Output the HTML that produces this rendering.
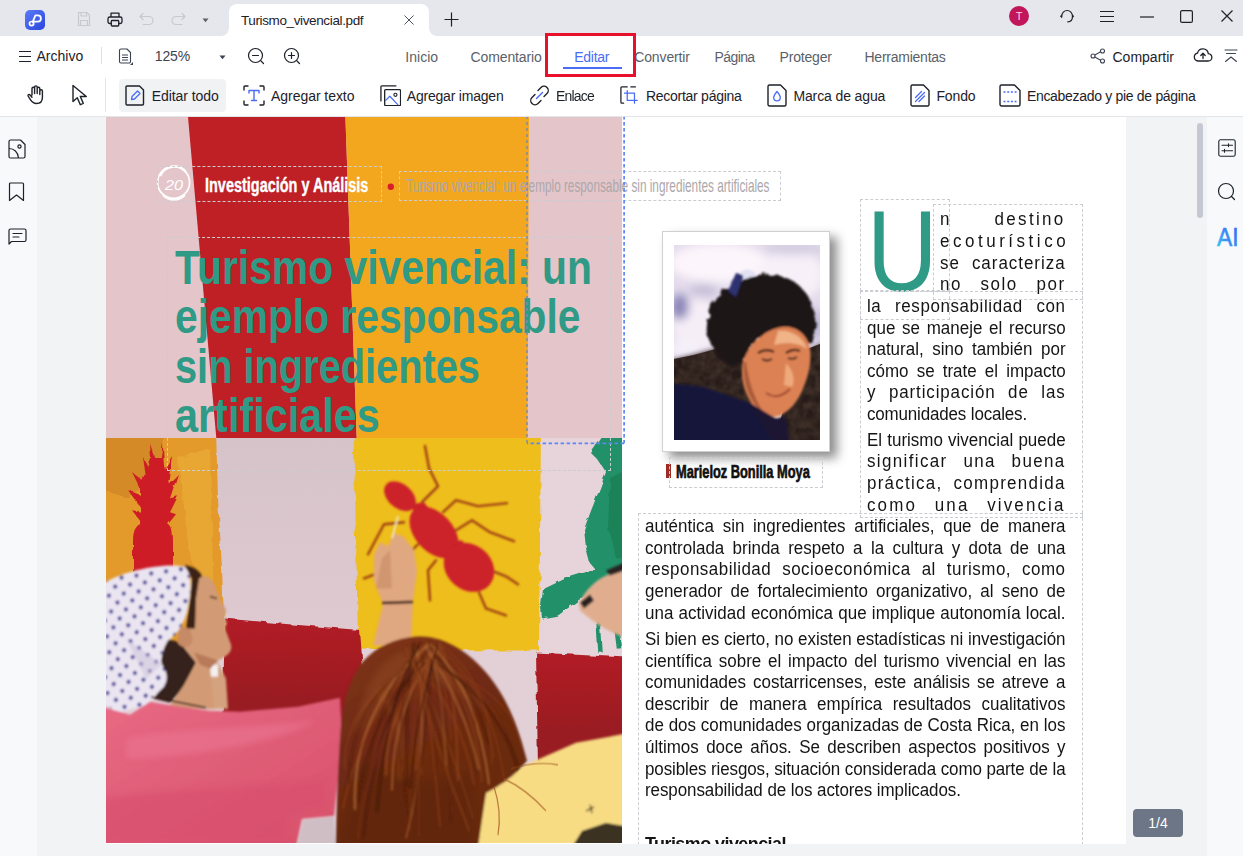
<!DOCTYPE html>
<html lang="es">
<head>
<meta charset="utf-8">
<title>Turismo_vivencial.pdf</title>
<style>
*{box-sizing:border-box;margin:0;padding:0}
html,body{width:1243px;height:856px;overflow:hidden}
body{position:relative;background:#f2f3f5;font-family:"Liberation Sans","DejaVu Sans",sans-serif;color:#1d2129;font-size:14px}
.abs{position:absolute}
svg text{font-family:"Liberation Sans","DejaVu Sans",sans-serif}
#titlebar{left:0;top:0;width:1243px;height:36px;background:#e6e7ec}
#tab{left:229px;top:4px;width:200px;height:32px;background:#fff;border-radius:8px 8px 0 0}
#tb1{left:0;top:36px;width:1243px;height:39px;background:#fff}
#tb2{left:0;top:75px;width:1243px;height:42px;background:#fff;border-bottom:1px solid #e3e5e9}
#lside{left:0;top:117px;width:37px;height:739px;background:#f8f9fb}
#rside{left:1207px;top:117px;width:36px;height:739px;background:#f8f9fb}
#page{left:106px;top:117px;width:1020px;height:727px;background:#fff;overflow:hidden}
#pg{left:-106px;top:-117px;width:1243px;height:856px}
.t{position:absolute;white-space:nowrap;line-height:1}
.m1{font-size:14px;color:#5a5f69;top:50px}
.m2{font-size:14px;color:#1d2129;top:89px}
.bl{position:absolute;white-space:nowrap;line-height:1;color:#141414;text-align:justify;text-align-last:justify;transform:scaleX(0.97);transform-origin:0 0}
</style>
</head>
<body>
<div id="titlebar" class="abs"></div>
<div id="tab" class="abs"></div>
<div id="tb1" class="abs"></div>
<div id="tb2" class="abs"></div>
<div id="lside" class="abs"></div>
<div id="rside" class="abs"></div>
<div id="page" class="abs"><div id="pg" class="abs">
<svg class="abs" style="left:106px;top:117px" width="516" height="321" viewBox="106 117 516 321">
<rect x="106" y="117" width="516" height="321" fill="#e4c6ca"/>
<path d="M188 117H345.400L356.700 438H216.300Z" fill="#be2026"/>
<path d="M345.400 117H529L527.500 438H356.700Z" fill="#f3a71f"/>
<circle cx="173.600" cy="182.400" r="16" fill="none" stroke="#fff" stroke-width="1.700"/>
<path d="M160 176a15.500 15.500 0 0 1 26-4" fill="none" stroke="#fff" stroke-width="2.600" opacity="0.900"/>
<path d="M163 195a15.500 15.500 0 0 0 22 0" fill="none" stroke="#fff" stroke-width="2.400" opacity="0.900"/>
<circle cx="390.800" cy="186.800" r="3.200" fill="#d7202a"/>
</svg>
<svg class="abs" style="left:164.5px;top:174.5px;overflow:visible" width="18.0" height="19.5"><text x="0" y="15" textLength="18.0" lengthAdjust="spacingAndGlyphs" fill="#fff" style="font-size:15px;font-style:italic;">20</text></svg>
<svg class="abs" style="left:204.7px;top:172.2px;overflow:visible" width="163.4" height="25.5"><text x="0" y="19.6" textLength="163.4" lengthAdjust="spacingAndGlyphs" fill="#fff" style="font-size:19.6px;font-weight:bold;stroke:#fff;stroke-width:0.4px;">Investigación y Análisis</text></svg>
<svg class="abs" style="left:405.5px;top:172.8px;overflow:visible" width="363.5" height="24.7"><text x="0" y="19" textLength="363.5" lengthAdjust="spacingAndGlyphs" fill="#aca7aa" style="font-size:19px;">Turismo vivencial: un ejemplo responsable sin ingredientes artificiales</text></svg>
<svg class="abs" style="left:175px;top:235.5px;overflow:visible" width="417.0" height="61.8"><text x="0" y="47.5" textLength="417.0" lengthAdjust="spacingAndGlyphs" fill="#2f9a85" style="font-size:47.5px;font-weight:bold;">Turismo vivencial: un</text></svg>
<svg class="abs" style="left:175px;top:284.5px;overflow:visible" width="405.5" height="61.8"><text x="0" y="47.5" textLength="405.5" lengthAdjust="spacingAndGlyphs" fill="#2f9a85" style="font-size:47.5px;font-weight:bold;">ejemplo responsable</text></svg>
<svg class="abs" style="left:175px;top:334.8px;overflow:visible" width="305.0" height="61.8"><text x="0" y="47.5" textLength="305.0" lengthAdjust="spacingAndGlyphs" fill="#2f9a85" style="font-size:47.5px;font-weight:bold;">sin ingredientes</text></svg>
<svg class="abs" style="left:175px;top:384.3px;overflow:visible" width="204.7" height="61.8"><text x="0" y="47.5" textLength="204.7" lengthAdjust="spacingAndGlyphs" fill="#2f9a85" style="font-size:47.5px;font-weight:bold;">artificiales</text></svg>
<svg class="abs" style="left:106px;top:438px" width="516" height="405" viewBox="0 0 516 404" preserveAspectRatio="none">
<defs>
<filter id="b1" x="-5%" y="-5%" width="110%" height="110%"><feGaussianBlur stdDeviation="0.8"/></filter>
<filter id="b3" x="-10%" y="-10%" width="120%" height="120%"><feGaussianBlur stdDeviation="3"/></filter>
<filter id="b6" x="-20%" y="-20%" width="140%" height="140%"><feGaussianBlur stdDeviation="6"/></filter>
<filter id="rough" x="-5%" y="-5%" width="110%" height="110%"><feTurbulence type="fractalNoise" baseFrequency="0.09" numOctaves="2" seed="3" result="n"/><feDisplacementMap in="SourceGraphic" in2="n" scale="5"/><feGaussianBlur stdDeviation="0.6"/></filter>
<pattern id="dots" width="15" height="16" patternUnits="userSpaceOnUse" patternTransform="rotate(-8)"><circle cx="3.500" cy="4" r="2" fill="#2e2a8a"/><circle cx="11" cy="12" r="2" fill="#2e2a8a"/></pattern>
<linearGradient id="hairg" x1="0.200" y1="0" x2="0.700" y2="1"><stop offset="0" stop-color="#7e3416"/><stop offset="0.450" stop-color="#6e2a12"/><stop offset="1" stop-color="#682a10"/></linearGradient>
<linearGradient id="wallg" x1="0" y1="0" x2="0" y2="1"><stop offset="0" stop-color="#d6c2c9"/><stop offset="1" stop-color="#dfcad2"/></linearGradient>
<linearGradient id="pinkg" x1="0" y1="0" x2="1" y2="1"><stop offset="0" stop-color="#e86a84"/><stop offset="1" stop-color="#d8506a"/></linearGradient>
<linearGradient id="redg" x1="0" y1="0" x2="0" y2="1"><stop offset="0" stop-color="#b21e26"/><stop offset="0.700" stop-color="#981a20"/></linearGradient><clipPath id="pc"><rect width="516" height="404"/></clipPath>
</defs>
<g clip-path="url(#pc)">
<rect width="516" height="404" fill="#e3d0d7"/>
<g filter="url(#rough)">
<!-- wall -->
<rect x="105" y="-5" width="150" height="210" fill="url(#wallg)"/>
<rect x="431" y="-5" width="95" height="235" fill="#e6d4da"/>
<!-- orange panel -->
<path d="M-8 -8H110L112 60L116 130L119 210H-8Z" fill="#e39a2c"/>
<path d="M-8 -8H60L50 40L20 60L-8 50Z" fill="#d48a28"/>
<path d="M72 20L104 10L108 170L84 120Z" fill="#e8a632"/>
<!-- pineapple -->
<path d="M27 134V102C27 92 30 87 36 85L26 72L38 74L22 52L38 58L26 34L40 46L36 18L46 36L44 6L53 30L57 5L58 32L66 18L62 46L72 36L64 60L72 58L64 74L70 76L62 86C66 88 67 94 67 102V134Z" fill="#cd1e28"/>
<path d="M34 86L34 50L44 20L56 20L64 50L62 86Z" fill="#cd1e28"/>
<!-- yellow panel -->
<path d="M247.500 -8H435L434 100L433 212L300 211.500L252 210L250 100Z" fill="#eebe1e"/>
<!-- red band left -->
<path d="M119 180L180 185.500L254 191.500L262 300H116Z" fill="url(#redg)"/>
<!-- red panel right -->
<path d="M430 214L524 219V330H432Z" fill="url(#redg)"/>
<!-- green animal -->
<path d="M498 -6L484 14L492 22L500 34L494 50L486 70L478 91L480 110L484 125L489 131L460 140L437 151L435 168L436 180L452 177L479 157L490 151L497 160L524 164V-6Z" fill="#23916a"/>
<path d="M504 40L524 30V120H510L502 90Z" fill="#1b8259"/>
<path d="M491 160L494.500 214M509 178L513 210" stroke="#23916a" stroke-width="4.500" fill="none"/>
</g>
<g filter="url(#b1)">
<!-- ant -->
<g fill="none" stroke="#a04016" stroke-width="2.400" stroke-linecap="round" stroke-linejoin="round">
<path d="M319 8L323 30L332 48L316 64"/><path d="M337 74L350 62L372 68L401 65"/><path d="M350 92L366 82L384 94L408 103"/><path d="M385 132L400 138L412 146"/><path d="M373 154L380 170L400 177"/><path d="M330 122L322 132L324 162"/><path d="M298 84L278 86L262 116"/><path d="M312 106L290 128L258 140"/>
</g>
<g fill="#cc202a"><path d="M304 66L318 64L346 100L330 112Z"/><path d="M338 104L356 102L366 118L346 128Z"/><ellipse cx="294" cy="58" rx="18" ry="12" transform="rotate(40 294 58)"/><ellipse cx="328" cy="94" rx="30" ry="19" transform="rotate(48 328 94)"/><ellipse cx="363" cy="129" rx="27" ry="22.500" transform="rotate(40 363 129)"/></g>
<!-- right hand + brush -->
<path d="M473 165C480 150 492 139 506 135L524 130V200C505 196 488 184 474 172Z" fill="#e0ae8e"/>
<path d="M474 164L484 156L488 162L478 170Z" fill="#2a2220"/>
<path d="M500 132L524 122V130L504 137Z" fill="#2a2220"/>
<!-- girl1 raised arm and hand -->
<path d="M267 207L277 166L268 142L268 116L274 104L282 108L288 95L297 98L302 104L308 112L311 132L307 162L305 207Z" fill="#e0a880"/>
<path d="M270 150L276 120L284 112L286 150Z" fill="#d09670"/>
<path d="M276 164.500L307 163.500" stroke="#3a1e18" stroke-width="2.600" fill="none"/>
<path d="M286 100L292 78" stroke="#f4ead8" stroke-width="1.600" fill="none"/>
<!-- girl1 other hand -->
<path d="M98 226L112 224L120 240L122 270L100 270Z" fill="#d4a27e"/>
<path d="M98 226L112 226L112 238L100 238Z" fill="#f4f0f0"/>
<!-- girl1 hair -->
<path d="M78 127C90 128 99 136 97 146L93 160L91 190L80 192L84 160L86 140Z" fill="#3a2118"/>
<path d="M60 200L74 204L90 224L80 246L64 264L48 260L56 246L54 226Z" fill="#35201a"/>
<!-- girl1 face -->
<path d="M93 140C101 134 108 142 110 150L114 160L120.500 172L118 178L121 184L119 190L125 206C127 214 120 218 112 222L104 228L108 270L62 270L78 246L90 224L74 204C72 196 76 190 82 190L89 190L90 160Z" fill="#d29b76"/>
<path d="M72 190C80 186 88 192 86 203C84 210 76 210 72 205Z" fill="#c68a66"/>
<path d="M88 214L112 222L104 230L94 226Z" fill="#b87a58"/>
<path d="M104 158l7 2" stroke="#4a2a1e" stroke-width="1.600"/>
<!-- scarf -->
<path id="scf" d="M-4 146C10 136 50 124 78 128C86 134 86 150 82 168C80 182 72 196 62 202C56 212 54 220 56 226C62 234 62 242 58 248L40 266L12 274L-4 264Z" fill="#ebe5f1"/>
<path d="M-4 146C10 136 50 124 78 128C86 134 86 150 82 168C80 182 72 196 62 202C56 212 54 220 56 226C62 234 62 242 58 248L40 266L12 274L-4 264Z" fill="url(#dots)"/>
<path d="M20 200L56 226L40 240Z" fill="#cfc6dc" opacity="0.600"/>
<!-- pink shirt -->
<path d="M-4 268L24 276L44 263L74 268L103 272L134 273L192 268L234 259L236 300L232 340L228 377L196 380L190 408H-4Z" fill="url(#pinkg)"/>
<path d="M197 381L228 378L229 408H191Z" fill="#cfbec4"/>
<path d="M45 258L100 269" stroke="#3a1a1a" stroke-width="1.500" fill="none"/>
<!-- yellow shirt -->
<path d="M366 408L372 356L420 326L470 304L524 294V408Z" fill="#f8dc84"/>
<path d="M466 408L476 392L500 384L524 388V408Z" fill="#3a3020"/>
<path d="M480 372l8-4M484 366l2 8" stroke="#2a2418" stroke-width="1.200"/>
<!-- girl2 hair -->
<path d="M312 198C340 197 368 216 388 244C404 266 414 294 421 322C412 334 396 346 380 354L372 408H230C230 380 232 330 234 300C236 270 240 246 256 224C270 208 290 199 312 198Z" fill="url(#hairg)"/>
</g>
<g filter="url(#b3)" opacity="0.650">
<path d="M300 212C330 212 360 236 382 276C360 256 330 238 300 240C280 245 262 268 250 300C252 260 270 218 300 212Z" fill="#8a4420"/>
<path d="M250 320C280 336 320 348 366 336L368 408H232Z" fill="#5e2610"/>
<path d="M270 250C290 270 300 300 296 340" stroke="#96501f" stroke-width="5" fill="none"/>
<path d="M330 240C360 270 380 300 384 340" stroke="#6a2a12" stroke-width="6" fill="none"/>
<path d="M20 300C60 290 140 290 210 282C180 300 100 318 20 320Z" fill="#ea7590"/>
<path d="M-4 360C60 350 140 350 218 342L218 366L184 374L180 408H-4Z" fill="#d8506e"/>
</g>
<clipPath id="hc"><path d="M312 198C340 197 368 216 388 244C404 266 414 294 421 322C412 334 396 346 380 354L372 408H230C230 380 232 330 234 300C236 270 240 246 256 224C270 208 290 199 312 198Z"/></clipPath>
<g fill="none" stroke-linecap="round" clip-path="url(#hc)" filter="url(#b1)"><path d="M314 214Q327 301 334 387" stroke="#8a3e1a" stroke-width="2.4" opacity="0.52"/><path d="M321 207Q245 274 249 370" stroke="#b06a34" stroke-width="2.8" opacity="0.69"/><path d="M322 215Q261 261 237 369" stroke="#8a3e1a" stroke-width="2.1" opacity="0.62"/><path d="M309 215Q273 252 258 352" stroke="#5a200e" stroke-width="1.5" opacity="0.70"/><path d="M336 219Q352 239 357 311" stroke="#7a3014" stroke-width="1.2" opacity="0.39"/><path d="M308 205Q300 242 300 346" stroke="#3a1408" stroke-width="2.8" opacity="0.49"/><path d="M299 215Q342 255 353 304" stroke="#7a3014" stroke-width="2.7" opacity="0.40"/><path d="M324 204Q360 247 371 334" stroke="#5a200e" stroke-width="2.4" opacity="0.50"/><path d="M311 211Q325 305 300 399" stroke="#b06a34" stroke-width="1.5" opacity="0.66"/><path d="M304 211Q345 292 346 373" stroke="#8a3e1a" stroke-width="1.8" opacity="0.35"/><path d="M320 219Q246 251 243 345" stroke="#4a1a0c" stroke-width="1.7" opacity="0.51"/><path d="M334 213Q386 254 404 309" stroke="#7a3014" stroke-width="2.1" opacity="0.60"/><path d="M302 215Q375 238 388 319" stroke="#9a4e22" stroke-width="1.2" opacity="0.36"/><path d="M335 208Q350 245 352 341" stroke="#8a3e1a" stroke-width="2.7" opacity="0.69"/><path d="M301 213Q363 252 382 304" stroke="#5a200e" stroke-width="1.0" opacity="0.44"/><path d="M314 205Q281 262 271 372" stroke="#3a1408" stroke-width="2.8" opacity="0.58"/><path d="M324 215Q234 264 239 331" stroke="#9a4e22" stroke-width="1.0" opacity="0.57"/><path d="M315 217Q329 269 330 336" stroke="#5a200e" stroke-width="2.3" opacity="0.40"/><path d="M335 210Q278 271 280 336" stroke="#9a4e22" stroke-width="2.6" opacity="0.55"/><path d="M321 211Q375 253 382 304" stroke="#3a1408" stroke-width="2.3" opacity="0.49"/><path d="M325 214Q315 246 315 336" stroke="#b06a34" stroke-width="1.2" opacity="0.36"/><path d="M334 206Q385 241 386 324" stroke="#8a3e1a" stroke-width="2.2" opacity="0.42"/><path d="M303 220Q354 266 368 345" stroke="#8a3e1a" stroke-width="2.1" opacity="0.63"/><path d="M326 208Q272 262 257 398" stroke="#4a1a0c" stroke-width="2.5" opacity="0.65"/><path d="M324 221Q266 264 252 363" stroke="#3a1408" stroke-width="1.7" opacity="0.53"/><path d="M323 217Q347 299 345 381" stroke="#4a1a0c" stroke-width="2.6" opacity="0.36"/><path d="M324 214Q314 257 310 331" stroke="#9a4e22" stroke-width="2.4" opacity="0.44"/><path d="M327 218Q319 296 308 374" stroke="#5a200e" stroke-width="2.5" opacity="0.69"/><path d="M323 208Q342 243 345 301" stroke="#8a3e1a" stroke-width="1.4" opacity="0.62"/><path d="M318 221Q410 254 415 308" stroke="#8a3e1a" stroke-width="1.2" opacity="0.68"/><path d="M325 206Q372 254 383 345" stroke="#b06a34" stroke-width="2.4" opacity="0.68"/><path d="M315 216Q304 291 304 391" stroke="#8a3e1a" stroke-width="1.4" opacity="0.49"/><path d="M300 210Q342 294 367 379" stroke="#9a4e22" stroke-width="1.6" opacity="0.38"/><path d="M314 214Q368 233 371 301" stroke="#7a3014" stroke-width="1.1" opacity="0.54"/><path d="M323 220Q402 267 415 345" stroke="#3a1408" stroke-width="2.7" opacity="0.52"/><path d="M334 206Q286 265 286 351" stroke="#b06a34" stroke-width="1.9" opacity="0.67"/><path d="M306 216Q327 303 363 391" stroke="#8a3e1a" stroke-width="2.7" opacity="0.53"/><path d="M319 208Q357 262 373 330" stroke="#b06a34" stroke-width="2.7" opacity="0.54"/><path d="M336 206Q261 299 252 399" stroke="#7a3014" stroke-width="2.7" opacity="0.44"/><path d="M315 206Q313 269 313 397" stroke="#8a3e1a" stroke-width="1.8" opacity="0.36"/><path d="M306 217Q285 296 303 375" stroke="#4a1a0c" stroke-width="1.6" opacity="0.47"/><path d="M321 206Q336 236 340 326" stroke="#b06a34" stroke-width="2.6" opacity="0.36"/><path d="M321 219Q368 251 376 343" stroke="#8a3e1a" stroke-width="2.5" opacity="0.56"/><path d="M330 208Q385 246 399 345" stroke="#8a3e1a" stroke-width="1.4" opacity="0.70"/><path d="M332 206Q311 272 304 349" stroke="#3a1408" stroke-width="2.0" opacity="0.60"/><path d="M304 215Q332 261 338 328" stroke="#4a1a0c" stroke-width="1.2" opacity="0.53"/></g>
<g fill="none" stroke="#9a4a1c" stroke-width="1.200" opacity="0.700"><path d="M405 330Q430 322 452 326"/><path d="M398 340Q420 350 440 372"/><path d="M388 348Q396 372 392 396"/></g>
</g>
</svg>

<div class="abs" style="left:661.500px;top:231px;width:168px;height:221px;background:#fff;border:1px solid #d0d0d0;box-shadow:7px 6px 10px rgba(0,0,0,0.45)"></div>
<svg class="abs" style="left:673.500px;top:244.500px" width="146" height="195" viewBox="0 0 146 195">
<defs><filter id="pb1" x="-20%" y="-20%" width="140%" height="140%"><feGaussianBlur stdDeviation="1.200"/></filter><filter id="pb2" x="-20%" y="-20%" width="140%" height="140%"><feGaussianBlur stdDeviation="2.500"/></filter><filter id="pb5" x="-30%" y="-30%" width="160%" height="160%"><feGaussianBlur stdDeviation="5"/></filter>
<filter id="mott" x="0" y="0" width="100%" height="100%"><feTurbulence type="fractalNoise" baseFrequency="0.12" numOctaves="2" seed="7"/><feColorMatrix values="0 0 0 0 0.35  0 0 0 0 0.22  0 0 0 0 0.14  0.9 0.9 0 0 -0.55"/></filter>
<filter id="wisp" x="-10%" y="-10%" width="120%" height="120%"><feTurbulence type="fractalNoise" baseFrequency="0.15" numOctaves="2" seed="5" result="n"/><feDisplacementMap in="SourceGraphic" in2="n" scale="7"/><feGaussianBlur stdDeviation="0.700"/></filter><clipPath id="ppc"><rect width="146" height="195"/></clipPath><clipPath id="terr"><path d="M0 114L20 110L42 104L60 112L80 120L80 195H0ZM128 106L146 99V195H100Z"/></clipPath></defs>
<g clip-path="url(#ppc)">
<rect width="146" height="195" fill="#e3daeb"/>
<g filter="url(#pb5)">
<ellipse cx="45" cy="18" rx="50" ry="20" fill="#fcf5fb"/>
<ellipse cx="118" cy="30" rx="32" ry="26" fill="#f8f0f8"/>
<ellipse cx="24" cy="80" rx="26" ry="26" fill="#f6eef7"/>
<ellipse cx="6" cy="62" rx="9" ry="13" fill="#8a85b8"/>
<ellipse cx="30" cy="45" rx="14" ry="7" fill="#c6bfd8"/>
<ellipse cx="138" cy="80" rx="14" ry="16" fill="#c2bbd8"/>
<ellipse cx="120" cy="4" rx="30" ry="6" fill="#d2cbe0"/>
<ellipse cx="10" cy="104" rx="16" ry="8" fill="#f4f1fb"/>
</g>
<g filter="url(#pb2)">
<path d="M-5 116L20 110L42 104L60 120L60 200H-5Z" fill="#2a1f1b"/>
<path d="M128 108L150 98V200H100Z" fill="#33261d"/>
</g>
<g clip-path="url(#terr)"><rect x="0" y="95" width="146" height="100" fill="#261b18"/><rect x="0" y="95" width="146" height="100" filter="url(#mott)" opacity="0.300"/></g>
<g filter="url(#pb1)">
<path d="M34 74C36 60 42 48 56 40C66 32 84 28 100 30C120 32 134 46 139 62C143 76 141 92 137 100L128 92L112 84L92 88L78 100L70 116L62 122C50 120 40 108 36 96C32 90 32 82 34 74Z" fill="#1c1216" filter="url(#wisp)"/>
<path d="M54 46L62 28L70 30L62 52Z" fill="#2e3070"/>
<path d="M66 28C70 22 80 24 82 30L72 34Z" fill="#e2e2f4"/>
<path d="M108 82C122 80 134 90 136 104C138 118 134 132 128 146C122 160 110 172 98 172C88 172 80 164 74 152C68 140 66 126 70 114C76 98 92 84 108 82Z" fill="#dc8152"/>
<path d="M104 86C116 84 130 92 133 104C126 98 112 96 100 100Z" fill="#f0b488"/>
<path d="M112 118C118 124 122 134 118 142L110 140Z" fill="#eeaa7c"/>
<path d="M72 116C74 132 78 150 90 168C78 160 68 140 70 118Z" fill="#a85c3a"/>
<path d="M-5 138L30 142L76 158L106 176L116 200H-5Z" fill="#15183a"/>
<path d="M76 158L98 174L112 172L116 200H100Z" fill="#1c1830"/>
<path d="M84 108q8-5 16-1M112 108q7-5 14-2" stroke="#3a1e16" stroke-width="2.200" fill="none"/>
<path d="M88 114q5 3 10 0M114 113q5 2 9-1" stroke="#2a1612" stroke-width="1.800" fill="none"/>
<path d="M92 148q12 8 24-4" stroke="#9a4634" stroke-width="2" fill="none"/>
</g>
</g>
</svg>

<div class="abs" style="left:666px;top:464px;width:4.500px;height:13.500px;background:#9c2a26"></div>
<svg class="abs" style="left:676.3px;top:459.6px;overflow:visible" width="133.8" height="23.4"><text x="0" y="18" textLength="133.8" lengthAdjust="spacingAndGlyphs" fill="#111" style="font-size:18px;font-weight:bold;stroke:#111;stroke-width:0.7px;">Marieloz Bonilla Moya</text></svg>
<svg class="abs" style="left:867.0px;top:176.3px;overflow:visible" width="70.6" height="149.0"><text x="0" y="114.6" textLength="70.6" lengthAdjust="spacingAndGlyphs" fill="#2f9a85" style="font-size:114.6px;">U</text></svg>
<div class="bl" style="left:940px;top:211.2px;width:129.48px;font-size:17.5px;letter-spacing:2.4px;">n destino</div>
<div class="bl" style="left:940px;top:232.9px;width:133.12px;font-size:17.5px;letter-spacing:3.636px;">ecoturístico</div>
<div class="bl" style="left:940px;top:254.5px;width:129.48px;font-size:17.5px;letter-spacing:1.0px;">se caracteriza</div>
<div class="bl" style="left:940px;top:276.2px;width:129.48px;font-size:17.5px;letter-spacing:1.6px;">no solo por</div>
<div class="bl" style="left:867px;top:297.8px;width:204.74px;font-size:17.5px;letter-spacing:0.6px;">la responsabilidad con</div>
<div class="bl" style="left:867px;top:319.5px;width:204.74px;font-size:17.5px;">que se maneje el recurso</div>
<div class="bl" style="left:867px;top:341.1px;width:204.74px;font-size:17.5px;">natural, sino también por</div>
<div class="bl" style="left:867px;top:362.8px;width:204.74px;font-size:17.5px;">cómo se trate el impacto</div>
<div class="bl" style="left:867px;top:384.4px;width:204.74px;font-size:17.5px;letter-spacing:0.9px;">y participación de las</div>
<div class="bl" style="left:867px;top:406.1px;width:164.95px;font-size:17.5px;letter-spacing:-0.177px;">comunidades locales.</div>
<div class="bl" style="left:867px;top:431.5px;width:204.74px;font-size:17.5px;">El turismo vivencial puede</div>
<div class="bl" style="left:867px;top:453.2px;width:204.74px;font-size:17.5px;letter-spacing:1.4px;">significar una buena</div>
<div class="bl" style="left:867px;top:474.8px;width:204.74px;font-size:17.5px;letter-spacing:1.3px;">práctica, comprendida</div>
<div class="bl" style="left:867px;top:496.5px;width:204.74px;font-size:17.5px;letter-spacing:2.2px;">como una vivencia</div>
<div class="bl" style="left:645.1px;top:518.1px;width:433.51px;font-size:17.5px;">auténtica sin ingredientes artificiales, que de manera</div>
<div class="bl" style="left:645.1px;top:539.8px;width:433.51px;font-size:17.5px;">controlada brinda respeto a la cultura y dota de una</div>
<div class="bl" style="left:645.1px;top:561.4px;width:433.51px;font-size:17.5px;letter-spacing:0.5px;">responsabilidad socioeconómica al turismo, como</div>
<div class="bl" style="left:645.1px;top:583.1px;width:433.51px;font-size:17.5px;">generador de fortalecimiento organizativo, al seno de</div>
<div class="bl" style="left:645.1px;top:604.7px;width:433.51px;font-size:17.5px;">una actividad económica que implique autonomía local.</div>
<div class="bl" style="left:645.1px;top:630.8px;width:433.51px;font-size:17.5px;letter-spacing:-0.049px;">Si bien es cierto, no existen estadísticas ni investigación</div>
<div class="bl" style="left:645.1px;top:652.5px;width:433.51px;font-size:17.5px;">científica sobre el impacto del turismo vivencial en las</div>
<div class="bl" style="left:645.1px;top:674.1px;width:433.51px;font-size:17.5px;">comunidades costarricenses, este análisis se atreve a</div>
<div class="bl" style="left:645.1px;top:695.8px;width:433.51px;font-size:17.5px;">describir de manera empírica resultados cualitativos</div>
<div class="bl" style="left:645.1px;top:717.4px;width:433.51px;font-size:17.5px;">de dos comunidades organizadas de Costa Rica, en los</div>
<div class="bl" style="left:645.1px;top:739.1px;width:433.51px;font-size:17.5px;">últimos doce años. Se describen aspectos positivos y</div>
<div class="bl" style="left:645.1px;top:760.7px;width:433.51px;font-size:17.5px;letter-spacing:-0.121px;">posibles riesgos, situación considerada como parte de la</div>
<div class="bl" style="left:645.1px;top:782.4px;width:325.67px;font-size:17.5px;letter-spacing:-0.085px;">responsabilidad de los actores implicados.</div>
<div class="bl" style="left:645.1px;top:834.6px;width:145.26px;font-size:18.5px;letter-spacing:-0.578px;font-weight:bold;">Turismo vivencial</div>
<div class="abs" style="left:157px;top:166px;width:225px;height:36px;border:1px dashed #c9cdd2"></div>
<div class="abs" style="left:399px;top:171px;width:382px;height:30px;border:1px dashed #c9cdd2"></div>
<div class="abs" style="left:167px;top:236.5px;width:443.5px;height:234.0px;border:1px dashed #c9cdd2"></div>
<div class="abs" style="left:669px;top:457px;width:154px;height:31px;border:1px dashed #c9cdd2"></div>
<div class="abs" style="left:860px;top:199px;width:90px;height:92px;border:1px dashed #c9cdd2"></div>
<div class="abs" style="left:933px;top:204px;width:150px;height:96px;border:1px dashed #c9cdd2"></div>
<div class="abs" style="left:860px;top:291px;width:223px;height:227px;border:1px dashed #c9cdd2"></div>
<div class="abs" style="left:860px;top:291px;width:90px;height:29px;border:1px dashed #c9cdd2"></div>
<div class="abs" style="left:638px;top:513px;width:445px;height:387px;border:1px dashed #c9cdd2"></div>
<svg class="abs" style="left:520px;top:110px" width="110" height="340" viewBox="520 110 110 340" fill="none"><path d="M527 110V443.300" stroke="#7f8aa8" stroke-width="1.500" stroke-dasharray="3 3"/><path d="M624.100 110V443.300M624.100 443.300H527" stroke="#5b86f7" stroke-width="1.700" stroke-dasharray="3.500 2.500"/></svg>
</div></div>
<!-- title bar -->
<svg class="abs" style="left:25px;top:10px" width="20" height="20" viewBox="0 0 20 20"><defs><linearGradient id="lg" x1="0" y1="0" x2="1" y2="1"><stop offset="0" stop-color="#5b7cfa"/><stop offset="1" stop-color="#2a44dd"/></linearGradient></defs><rect width="20" height="20" rx="5" fill="url(#lg)"/><path d="M7.600 12.200L10.400 5.400h2.400a3.100 3.100 0 0 1 0 6.200h-3.600" fill="none" stroke="#fff" stroke-width="1.800" stroke-linecap="round" stroke-linejoin="round"/><circle cx="6.600" cy="13.600" r="2.100" fill="none" stroke="#fff" stroke-width="1.700"/></svg>
<svg class="abs" style="left:76px;top:11px" width="16" height="16" viewBox="0 0 16 16" fill="none" stroke="#c6c9d0" stroke-width="1.2"><path d="M2.5 1.5h8.5l2.5 2.5v10.500h-11z"/><path d="M5 1.500v3.500h5.500v-3.500M4.500 14.500v-5h7v5"/></svg>
<svg class="abs" style="left:107px;top:12px" width="16" height="15" viewBox="0 0 16 15" fill="none" stroke="#1d2129" stroke-width="1.300" stroke-linejoin="round"><path d="M4 5v-3.800h8v3.800"/><rect x="1" y="5" width="14" height="6.500" rx="1.800"/><rect x="4.300" y="8.500" width="7.400" height="5.500" rx="0.800" fill="#e6e7ec"/></svg>
<svg class="abs" style="left:139px;top:12px" width="16" height="14" viewBox="0 0 16 14" fill="none" stroke="#c6c9d0" stroke-width="1.200" stroke-linecap="round" stroke-linejoin="round"><path d="M4 1.500l-3 3 3 3M1 4.500h9a4 4 0 0 1 0 8h-6"/></svg>
<svg class="abs" style="left:170px;top:12px" width="16" height="14" viewBox="0 0 16 14" fill="none" stroke="#c6c9d0" stroke-width="1.200" stroke-linecap="round" stroke-linejoin="round"><path d="M12 1.500l3 3-3 3M15 4.500h-9a4 4 0 0 0 0 8h6"/></svg>
<svg class="abs" style="left:202px;top:18px" width="8" height="5" viewBox="0 0 8 5"><path d="M0.500 0.500h6l-3 3.800z" fill="#5a5f69"/></svg>
<svg class="abs" style="left:221px;top:28px" width="8" height="8" viewBox="0 0 8 8"><path d="M8 0v8h-8a8 8 0 0 0 8-8z" fill="#fff"/></svg><svg class="abs" style="left:429px;top:28px" width="8" height="8" viewBox="0 0 8 8"><path d="M0 0v8h8a8 8 0 0 1-8-8z" fill="#fff"/></svg>
<div class="t" style="left:240.9px;top:14px;font-size:13.500px;color:#1d2129;letter-spacing:-0.369px">Turismo_vivencial.pdf</div>
<svg class="abs" style="left:404px;top:15px" width="10" height="10" viewBox="0 0 10 10" stroke="#4e5561" stroke-width="1"><path d="M0.500 0.500l9 9M9.500 0.500l-9 9"/></svg>
<svg class="abs" style="left:444px;top:12px" width="15" height="15" viewBox="0 0 15 15" stroke="#1d2129" stroke-width="1.200"><path d="M7.500 0.500v14M0.500 7.500h14"/></svg>
<div class="abs" style="left:1009px;top:6px;width:20px;height:20px;border-radius:50%;background:#c2165b;color:#fbd3e0;font-size:11px;text-align:center;line-height:21px">T</div>
<svg class="abs" style="left:1059px;top:8px" width="16" height="16" viewBox="0 0 16 16" fill="none" stroke="#1d2129" stroke-width="1.200" stroke-linecap="round"><path d="M2.800 9v-1.200a5.300 5.300 0 0 1 10.600 0v1.500c0 3-2 4.400-4.600 4.600"/><path d="M2.800 6.200l-1.800 2 1.800 2zM13.400 6.200l1.800 2-1.800 2z" fill="#1d2129" stroke="none"/></svg>
<svg class="abs" style="left:1100px;top:10px" width="14" height="13" viewBox="0 0 14 13" stroke="#1d2129" stroke-width="1.100"><path d="M0 1.500h14M0 6.500h14M0 11.500h14"/></svg>
<svg class="abs" style="left:1140px;top:16px" width="14" height="2" viewBox="0 0 14 2" stroke="#1d2129" stroke-width="1.200"><path d="M0 1h14"/></svg>
<svg class="abs" style="left:1180px;top:10px" width="13" height="13" viewBox="0 0 13 13" fill="none" stroke="#1d2129" stroke-width="1.200"><rect x="0.600" y="0.600" width="11.800" height="11.800" rx="1.500"/></svg>
<svg class="abs" style="left:1221px;top:10px" width="12" height="12" viewBox="0 0 12 12" stroke="#1d2129" stroke-width="1.200"><path d="M0.500 0.500l11 11M11.500 0.500l-11 11"/></svg>

<!-- toolbar row 1 -->
<svg class="abs" style="left:19px;top:50px" width="12" height="12" viewBox="0 0 12 12" stroke="#1d2129" stroke-width="1"><path d="M0 1.500h12M0 6.500h12M0 11.500h12"/></svg>
<div class="t" style="left:36.5px;top:49px;font-size:14px;color:#1d2129;letter-spacing:0.002px">Archivo</div>
<div class="abs" style="left:101px;top:47px;width:1px;height:17px;background:#dcdfe4"></div>
<svg class="abs" style="left:118px;top:48px" width="16" height="18" viewBox="0 0 16 18" fill="none" stroke="#3c4350" stroke-width="1.100" stroke-linejoin="round"><path d="M1.500 2.500a1.500 1.500 0 0 1 1.500-1.500h6l3.500 3.500v9a1.500 1.500 0 0 1-1.500 1.500h-8a1.500 1.500 0 0 1-1.500-1.500z"/><path d="M4 7h6M4 9.500h6M4 12h6"/><path d="M15 14v3h-3z" fill="#3c4350" stroke="none"/></svg>
<div class="t" style="left:154.7px;top:49px;font-size:14px;color:#3c4350;letter-spacing:-0.077px">125%</div>
<svg class="abs" style="left:219px;top:55px" width="8" height="5" viewBox="0 0 8 5"><path d="M0.500 0.500h6l-3 3.800z" fill="#3c4350"/></svg>
<svg class="abs" style="left:247px;top:47px" width="18" height="18" viewBox="0 0 18 18" fill="none" stroke="#1d2129" stroke-width="1.200" stroke-linecap="round"><circle cx="8.500" cy="8.500" r="7"/><path d="M5.500 8.500h6M14 14l2.500 2.500"/></svg>
<svg class="abs" style="left:283px;top:47px" width="18" height="18" viewBox="0 0 18 18" fill="none" stroke="#1d2129" stroke-width="1.200" stroke-linecap="round"><circle cx="8.500" cy="8.500" r="7"/><path d="M5.500 8.500h6M8.500 5.500v6M14 14l2.500 2.500"/></svg>
<div class="t m1" style="left:405.2px;letter-spacing:0.053px">Inicio</div>
<div class="t m1" style="left:470.5px;letter-spacing:-0.117px">Comentario</div>
<div class="t m1" style="left:574.2px;color:#4a6cf7;letter-spacing:-0.262px">Editar</div>
<div class="abs" style="left:563px;top:67px;width:59px;height:2px;background:#4a6cf7"></div>
<div class="t m1" style="left:634.2px;letter-spacing:-0.122px">Convertir</div>
<div class="t m1" style="left:714.6px;letter-spacing:-0.616px">Página</div>
<div class="t m1" style="left:779.5px;letter-spacing:-0.175px">Proteger</div>
<div class="t m1" style="left:864.5px;letter-spacing:-0.244px">Herramientas</div>
<div class="abs" style="left:545px;top:33px;width:91px;height:44px;border:3px solid #e8102d"></div>
<svg class="abs" style="left:1090px;top:48px" width="16" height="16" viewBox="0 0 16 16" fill="none" stroke="#3c4350" stroke-width="1.100"><circle cx="12.500" cy="3" r="2"/><circle cx="12.500" cy="13" r="2"/><circle cx="3" cy="8" r="2"/><path d="M4.800 7l5.900-3.200M4.800 9l5.900 3.200"/></svg>
<div class="t" style="left:1112.5px;top:50px;font-size:14px;color:#1d2129;letter-spacing:0.005px">Compartir</div>
<svg class="abs" style="left:1193px;top:47px" width="20" height="16" viewBox="0 0 20 16" fill="none" stroke="#1d2129" stroke-width="1.300" stroke-linejoin="round" stroke-linecap="round"><path d="M5 14a4 4 0 0 1-.500-7.900 5.500 5.500 0 0 1 10.800 0.500 3.700 3.700 0 0 1-.300 7.400z"/><path d="M10 11.500v-5M7.800 8.500l2.200-2.200 2.200 2.200"/></svg>
<svg class="abs" style="left:1224px;top:49px" width="14" height="14" viewBox="0 0 14 14" fill="none" stroke="#3c4350" stroke-width="1.100" stroke-linecap="round" stroke-linejoin="round"><path d="M1 1h12M2.500 4.500h9M1.500 12.500l5.500-4.500 5.500 4.500"/></svg>

<!-- toolbar row 2 -->
<svg class="abs" style="left:25px;top:84px" width="22" height="22" viewBox="0 0 22 22" fill="none" stroke="#1d2129" stroke-width="1.400" stroke-linecap="round" stroke-linejoin="round"><path d="M7 11v-6.500a1.300 1.300 0 0 1 2.600 0v5M9.600 9.500v-6.300a1.300 1.300 0 0 1 2.600 0v6.300M12.200 9.500v-5a1.300 1.300 0 0 1 2.600 0v6M14.800 10.500v-3.500a1.300 1.300 0 0 1 2.600 0v6.500c0 4-2.500 6-6 6-3 0-4.500-1.300-6-3.800l-2.300-3.700c-.600-1.200 1-2.200 2-1l1.900 2.200"/></svg>
<svg class="abs" style="left:71px;top:84px" width="18" height="23" viewBox="0 0 18 23" fill="none" stroke="#1d2129" stroke-width="1.400" stroke-linejoin="round"><path d="M2 1.500v16l4.300-3.800 3 7 3-1.300-3-6.900h6z"/></svg>
<div class="abs" style="left:105px;top:78px;width:1px;height:34px;background:#e3e5e9"></div>
<div class="abs" style="left:119px;top:79px;width:107px;height:33px;background:#f1f2f4;border-radius:4px"></div>
<svg class="abs" style="left:125px;top:85px" width="20" height="21" viewBox="0 0 20 21" fill="none" stroke-linejoin="round"><path d="M1 2a1 1 0 0 1 1-1h12.500l4 4v14a1 1 0 0 1-1 1h-15.500a1 1 0 0 1-1-1z" stroke="#1d2129" stroke-width="1.400"/><path d="M6.500 14.500l.500-3 5.500-5.500 2.500 2.500-5.500 5.500z" stroke="#4a6cf7" stroke-width="1.300"/></svg>
<div class="t m2" style="left:151.8px;letter-spacing:-0.074px">Editar todo</div>
<svg class="abs" style="left:243px;top:85px" width="22" height="21" viewBox="0 0 22 21" fill="none" stroke-linecap="round" stroke-linejoin="round"><path d="M1 5v-3a1 1 0 0 1 1-1h3M17 1h3a1 1 0 0 1 1 1v3M21 16v3a1 1 0 0 1-1 1h-3M5 20h-3a1 1 0 0 1-1-1v-3" stroke="#1d2129" stroke-width="1.400"/><path d="M6 8v-2.500h10v2.500M11 5.500v10M8.500 15.500h5" stroke="#4a6cf7" stroke-width="1.400"/></svg>
<div class="t m2" style="left:271.1px;letter-spacing:-0.058px">Agregar texto</div>
<svg class="abs" style="left:379.500px;top:84.500px" width="21.500" height="21.500" viewBox="0 0 23 23" fill="none" stroke-linejoin="round"><path d="M1 17v-15a1 1 0 0 1 1-1h15" stroke="#1d2129" stroke-width="1.400" stroke-linecap="round"/><rect x="5" y="5" width="17" height="17" rx="1" stroke="#1d2129" stroke-width="1.400"/><path d="M5.500 17l5-5 9 9.500" stroke="#4a6cf7" stroke-width="1.300"/><circle cx="16.500" cy="10.500" r="1.700" stroke="#1d2129" stroke-width="1.200"/></svg>
<div class="t m2" style="left:406.8px;letter-spacing:-0.208px">Agregar imagen</div>
<svg class="abs" style="left:528px;top:84px" width="23" height="23" viewBox="0 0 23 23" fill="none" stroke-linecap="round"><path d="M10 6.500l3-3a4.200 4.200 0 0 1 6 6l-3 3M13 16.500l-3 3a4.200 4.200 0 0 1-6-6l3-3" stroke="#1d2129" stroke-width="1.400"/><path d="M8.500 14.500l6-6" stroke="#4a6cf7" stroke-width="1.400"/></svg>
<div class="t m2" style="left:556.1px;letter-spacing:-0.818px">Enlace</div>
<svg class="abs" style="left:620px;top:85.500px" width="19" height="19" viewBox="0 0 21 21" fill="none" stroke-linecap="round" stroke-linejoin="round"><path d="M8 1h-6a1 1 0 0 0-1 1v16a1 1 0 0 0 1 1h2M12 1h5" stroke="#1d2129" stroke-width="1.400"/><path d="M8 5v11h11M5 8h11v11" stroke="#4a6cf7" stroke-width="1.400"/></svg>
<div class="t m2" style="left:645.9px;letter-spacing:-0.261px">Recortar página</div>
<svg class="abs" style="left:767px;top:84px" width="20" height="23" viewBox="0 0 20 23" fill="none" stroke-linejoin="round"><path d="M1 2.500a1.500 1.500 0 0 1 1.500-1.500h11l5.500 5.500v14a1.500 1.500 0 0 1-1.500 1.500h-15a1.500 1.500 0 0 1-1.500-1.500z" stroke="#1d2129" stroke-width="1.400"/><path d="M10 7.500c2 2.500 3.300 4.300 3.300 6a3.300 3.300 0 0 1-6.600 0c0-1.700 1.300-3.500 3.300-6z" stroke="#4a6cf7" stroke-width="1.300"/></svg>
<div class="t m2" style="left:793.4px;letter-spacing:-0.115px">Marca de agua</div>
<svg class="abs" style="left:910px;top:84px" width="20" height="23" viewBox="0 0 20 23" fill="none" stroke-linejoin="round" stroke-linecap="round"><path d="M1 2.500a1.500 1.500 0 0 1 1.500-1.500h11l5.500 5.500v14a1.500 1.500 0 0 1-1.500 1.500h-15a1.500 1.500 0 0 1-1.500-1.500z" stroke="#1d2129" stroke-width="1.400"/><path d="M5.500 13.500l6-6M5.500 17.500l9-9M9 17.500l5.500-5.500" stroke="#4a6cf7" stroke-width="1.300"/></svg>
<div class="t m2" style="left:936.4px;letter-spacing:-0.120px">Fondo</div>
<svg class="abs" style="left:999px;top:84px" width="22" height="23" viewBox="0 0 22 23" fill="none" stroke-linejoin="round"><path d="M1 2.500a1.500 1.500 0 0 1 1.500-1.500h13l5.500 5.500v14a1.500 1.500 0 0 1-1.500 1.500h-17a1.500 1.500 0 0 1-1.500-1.500z" stroke="#1d2129" stroke-width="1.400"/><path d="M4.500 8h13M4.500 17.500h13" stroke="#4a6cf7" stroke-width="1.300" stroke-dasharray="2 1.700"/></svg>
<div class="t m2" style="left:1026.9px;letter-spacing:-0.308px">Encabezado y pie de página</div>

<!-- side bars -->
<svg class="abs" style="left:8px;top:139px" width="18" height="20" viewBox="0 0 18 20" fill="none" stroke="#1d2129" stroke-width="1.200" stroke-linejoin="round"><path d="M1 2.500a1.500 1.500 0 0 1 1.500-1.500h10l4.500 4.500v12a1.500 1.500 0 0 1-1.500 1.500h-13a1.500 1.500 0 0 1-1.500-1.500z"/><path d="M1 9.500c5 0 9 3.500 9.500 9.500"/><circle cx="11.500" cy="7.500" r="1.600"/></svg>
<svg class="abs" style="left:8px;top:182px" width="18" height="20" viewBox="0 0 18 20" fill="none" stroke="#1d2129" stroke-width="1.200" stroke-linejoin="round"><path d="M1.500 2a1 1 0 0 1 1-1h12a1 1 0 0 1 1 1v16.500l-7-5.500-7 5.500z"/></svg>
<svg class="abs" style="left:8px;top:228px" width="19" height="17" viewBox="0 0 19 17" fill="none" stroke="#1d2129" stroke-width="1.200" stroke-linejoin="round" stroke-linecap="round"><path d="M1 2.500a1.500 1.500 0 0 1 1.500-1.500h14a1.500 1.500 0 0 1 1.500 1.500v9.500a1.500 1.500 0 0 1-1.500 1.500h-13l-2.500 2.500z"/><path d="M5 5.500h9M5 9h6"/></svg>
<div class="abs" style="left:1197px;top:123px;width:6px;height:95px;border-radius:3px;background:#c4c8d2"></div>
<svg class="abs" style="left:1217.500px;top:138.500px" width="18" height="18" viewBox="0 0 18 18" fill="none" stroke="#1d2129" stroke-width="1.100" stroke-linecap="round"><rect x="0.800" y="0.800" width="16.400" height="16.400" rx="1.800"/><path d="M4 6.200h10.500M4 11.800h10.500M10.500 4.800v2.800M6.500 10.400v2.800"/></svg>
<svg class="abs" style="left:1217px;top:182px" width="19" height="19" viewBox="0 0 19 19" fill="none" stroke="#1d2129" stroke-width="1.200" stroke-linecap="round"><circle cx="9" cy="9" r="7.500"/><path d="M14.500 14.500l3 3"/></svg>
<svg class="abs" style="left:1217px;top:224px;overflow:visible" width="24" height="26"><defs><linearGradient id="aig" x1="1" y1="0" x2="0" y2="1"><stop offset="0" stop-color="#2d63f2"/><stop offset="0.550" stop-color="#3a8ff5"/><stop offset="1" stop-color="#38d2f2"/></linearGradient></defs><text x="0" y="22" textLength="21.500" lengthAdjust="spacingAndGlyphs" fill="url(#aig)" stroke="url(#aig)" stroke-width="0.600" style="font-size:26px">AI</text></svg>
<div class="abs" style="left:1133px;top:809px;width:50px;height:28px;border-radius:4px;background:#6c7686;color:#fff;font-size:14px;text-align:center;line-height:28px">1/4</div>


</body>
</html>
